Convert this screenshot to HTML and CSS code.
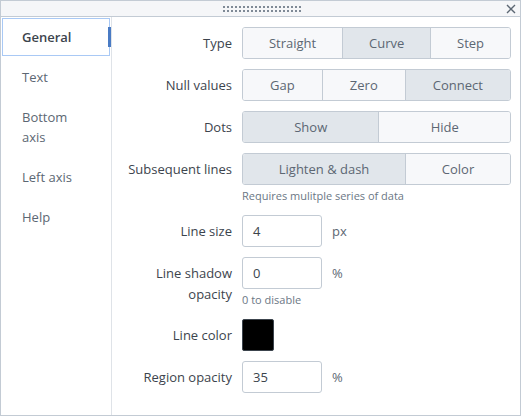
FILE: index.html
```html
<!DOCTYPE html>
<html>
<head>
<meta charset="utf-8">
<link rel="stylesheet" href="styles.css">
</head>
<body>
<div class="panel">
  <div class="header">
    <div class="handle"></div>
    <svg class="close" width="10" height="10" viewBox="0 0 10 10"><path d="M1 1L9 9M9 1L1 9" stroke="#5c6773" stroke-width="1.4" fill="none"/></svg>
  </div>
  <div class="body">
    <nav class="sidebar">
      <div class="nav-item active">General<span class="accent"></span></div>
      <div class="nav-item">Text</div>
      <div class="nav-item">Bottom<br>axis</div>
      <div class="nav-item">Left axis</div>
      <div class="nav-item">Help</div>
    </nav>
    <div class="content">
      <div class="row">
        <div class="label">Type</div>
        <div class="control">
          <div class="group">
            <div class="seg">Straight</div>
            <div class="seg sel">Curve</div>
            <div class="seg">Step</div>
          </div>
        </div>
      </div>
      <div class="row">
        <div class="label">Null values</div>
        <div class="control">
          <div class="group">
            <div class="seg">Gap</div>
            <div class="seg">Zero</div>
            <div class="seg sel">Connect</div>
          </div>
        </div>
      </div>
      <div class="row">
        <div class="label">Dots</div>
        <div class="control">
          <div class="group">
            <div class="seg sel">Show</div>
            <div class="seg">Hide</div>
          </div>
        </div>
      </div>
      <div class="row">
        <div class="label">Subsequent lines</div>
        <div class="control">
          <div class="group">
            <div class="seg sel">Lighten &amp; dash</div>
            <div class="seg">Color</div>
          </div>
          <div class="help">Requires mulitple series of data</div>
        </div>
      </div>
      <div class="row">
        <div class="label">Line size</div>
        <div class="control">
          <div class="inline"><div class="input">4</div><span class="unit">px</span></div>
        </div>
      </div>
      <div class="row">
        <div class="label two">Line shadow<br>opacity</div>
        <div class="control">
          <div class="inline"><div class="input">0</div><span class="unit">%</span></div>
          <div class="help">0 to disable</div>
        </div>
      </div>
      <div class="row">
        <div class="label">Line color</div>
        <div class="control">
          <div class="swatch"></div>
        </div>
      </div>
      <div class="row">
        <div class="label">Region opacity</div>
        <div class="control">
          <div class="inline"><div class="input">35</div><span class="unit">%</span></div>
        </div>
      </div>
    </div>
  </div>
</div>
</body>
</html>
```

FILE: styles.css
```css
html, body {
  margin: 0;
  padding: 0;
  background: #fff;
}
body {
  font-family: "Open Sans", "Liberation Sans", sans-serif;
  font-size: 13px;
  color: #3c444d;
}
.panel {
  width: 521px;
  height: 416px;
  box-sizing: border-box;
  border: 1px solid #c3cbd4;
  display: flex;
  flex-direction: column;
  background: #fff;
}
.header {
  height: 15px;
  background: #f5f6f8;
  border-bottom: 1px solid #c3cbd4;
  display: flex;
  align-items: center;
  justify-content: center;
  position: relative;
  flex: none;
}
.handle {
  width: 78px;
  height: 6px;
  margin-left: 2px;
  background-image:
    linear-gradient(90deg, transparent 2px, #f5f6f8 2px),
    linear-gradient(180deg, transparent 2px, #f5f6f8 2px),
    linear-gradient(#7f8a96, #7f8a96);
  background-size: 4px 4px, 4px 4px, 100% 100%;
}
.close {
  position: absolute;
  right: 4px;
  top: 3px;
}
.body {
  flex: 1;
  display: flex;
  min-height: 0;
}
.sidebar {
  width: 110px;
  border-right: 1px solid #dfe3e8;
  flex: none;
}
.nav-item {
  position: relative;
  padding: 10px 10px 10px 21px;
  line-height: 20px;
  color: #5c6773;
}
.nav-item.active {
  color: #3c444d;
  font-weight: 600;
  outline: 1px solid #a9c9f5;
  outline-offset: -2px;
}
.accent {
  position: absolute;
  right: 0;
  top: 10px;
  width: 3px;
  height: 20px;
  background: #4a7bc4;
}
.content {
  flex: 1;
  padding: 10px 9px 0 0;
}
.row {
  display: flex;
  gap: 10px;
  margin-bottom: 10px;
}
.label {
  width: 120px;
  flex: none;
  text-align: right;
  padding-top: 6px;
  line-height: 20px;
  color: #3c444d;
}
.label.two {
  line-height: 21px;
}
.control {
  flex: 1;
}
.group {
  display: flex;
  height: 32px;
  box-sizing: border-box;
  border: 1px solid #c3cbd4;
  border-radius: 3px;
  overflow: hidden;
}
.seg {
  flex: 1 1 auto;
  display: flex;
  align-items: center;
  justify-content: center;
  background: #f7f8fa;
  color: #5c6773;
  white-space: nowrap;
}
.seg + .seg {
  border-left: 1px solid #c3cbd4;
}
.seg.sel {
  background: #e1e6eb;
}
.help {
  font-size: 11px;
  line-height: 18px;
  margin-top: 2px;
  color: #6b7785;
}
.inline {
  display: flex;
  align-items: flex-start;
}
.input {
  width: 80px;
  height: 32px;
  box-sizing: border-box;
  border: 1px solid #c3cbd4;
  border-radius: 3px;
  padding: 0 10px;
  line-height: 30px;
  color: #3c444d;
}
.unit {
  margin-left: 10px;
  line-height: 32px;
  color: #5c6773;
}
.swatch {
  width: 32px;
  height: 32px;
  box-sizing: border-box;
  background: #000;
  border: 1px solid #3c444d;
  border-radius: 2px;
}
```
